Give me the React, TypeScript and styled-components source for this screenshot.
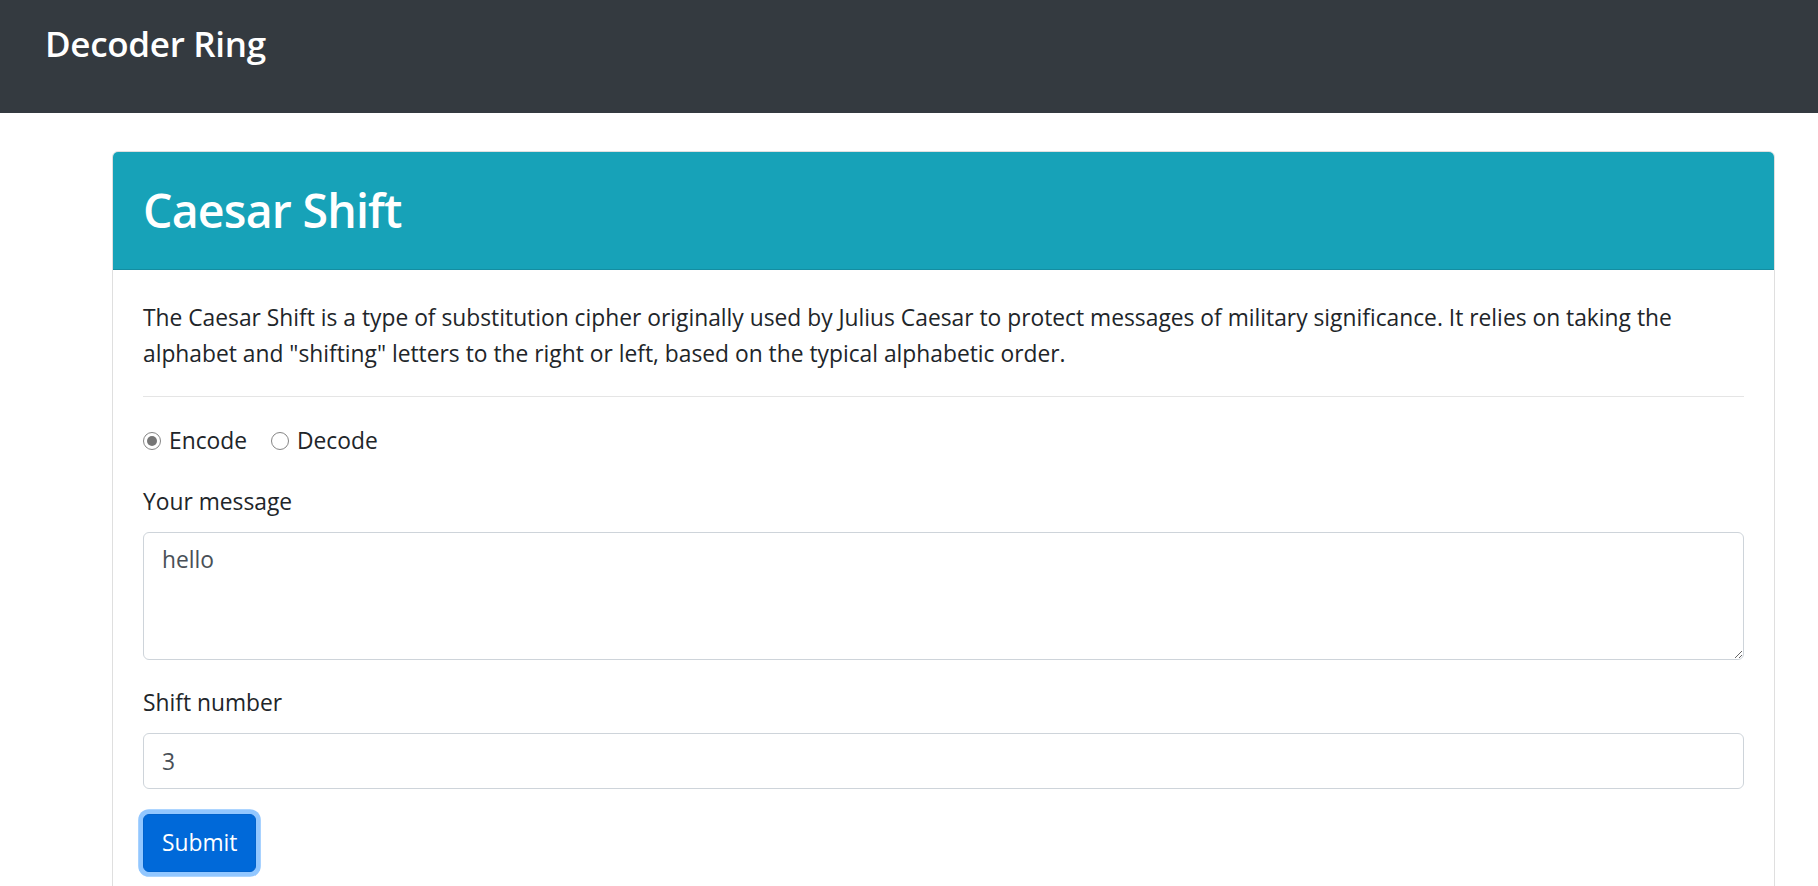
import React from "react";
import styled, { createGlobalStyle } from "styled-components";

const GlobalStyle = createGlobalStyle`
  html, body {
    margin: 0;
    padding: 0;
    background: #fff;
  }
  body {
    font-family: "Open Sans", "Noto Sans", "Liberation Sans", sans-serif;
    font-size: 22.8px;
    line-height: 36px;
    color: #212529;
  }
  * {
    box-sizing: border-box;
  }
`;

const Navbar = styled.nav`
  height: 113px;
  background: #343a40;
  padding: 22px 0 0 45px;
`;

const Brand = styled.a`
  display: inline-block;
  font-size: 35px;
  line-height: 44px;
  font-weight: 600;
  color: #fff;
  text-decoration: none;
  letter-spacing: -0.3px;
`;

const Main = styled.main`
  padding: 38px 43px 0 112px;
`;

const Card = styled.section`
  border: 1px solid rgba(0, 0, 0, 0.125);
  border-radius: 6px;
  overflow: hidden;
`;

const CardHeader = styled.header`
  height: 118px;
  background: #17a2b8;
  border-bottom: 1px solid rgba(0, 0, 0, 0.125);
  padding: 28px 30px 0;
`;

const Title = styled.h2`
  margin: 0;
  font-size: 46.5px;
  line-height: 60px;
  font-weight: 600;
  color: #fff;
  letter-spacing: -0.8px;
`;

const CardBody = styled.div`
  padding: 30px 30px 40px;
`;

const Intro = styled.p`
  margin: 0 0 24px;
`;

const Divider = styled.hr`
  margin: 0 0 24px;
  border: 0;
  border-top: 1px solid rgba(0, 0, 0, 0.1);
`;

const RadioRow = styled.div`
  display: flex;
  align-items: center;
  gap: 24px;
  height: 40px;
  margin-bottom: 23px;
`;

const RadioLabel = styled.label`
  display: flex;
  align-items: center;
  gap: 8px;
  cursor: pointer;
`;

const Radio = styled.input.attrs({ type: "radio" })`
  appearance: none;
  margin: 0;
  width: 18px;
  height: 18px;
  border-radius: 50%;
  border: 1.5px solid #858585;
  background: #fff;
  display: grid;
  place-items: center;

  &:checked::after {
    content: "";
    width: 10px;
    height: 10px;
    border-radius: 50%;
    background: #767676;
  }
`;

const Group = styled.div`
  margin-bottom: 25px;
`;

const Label = styled.label`
  display: block;
  margin-bottom: 12px;
`;

const fieldStyles = `
  display: block;
  width: 100%;
  padding: 9px 18px;
  font-family: inherit;
  font-size: 22.8px;
  line-height: 36px;
  color: #495057;
  background: #fff;
  border: 1px solid #ced4da;
  border-radius: 6px;
  outline: none;
`;

const TextArea = styled.textarea`
  ${fieldStyles}
  height: 128px;
  resize: vertical;
`;

const Input = styled.input`
  ${fieldStyles}
  height: 56px;
`;

const SubmitButton = styled.button`
  font-family: inherit;
  font-size: 22.8px;
  line-height: 36px;
  height: 58px;
  padding: 10px 18px;
  color: #fff;
  background: #0069d9;
  border: 1px solid #0062cc;
  border-radius: 6px;
  box-shadow: 0 0 0 4.8px rgba(38, 143, 255, 0.5);
  cursor: pointer;
`;

const App = () => {
  return (
    <>
      <GlobalStyle />
      <Navbar>
        <Brand href="#">Decoder Ring</Brand>
      </Navbar>
      <Main>
        <Card>
          <CardHeader>
            <Title>Caesar Shift</Title>
          </CardHeader>
          <CardBody>
            <Intro>
              The Caesar Shift is a type of substitution cipher originally used by Julius Caesar to
              protect messages of military significance. It relies on taking the alphabet and
              "shifting" letters to the right or left, based on the typical alphabetic order.
            </Intro>
            <Divider />
            <form onSubmit={(e) => e.preventDefault()}>
              <RadioRow>
                <RadioLabel>
                  <Radio name="mode" value="encode" defaultChecked />
                  Encode
                </RadioLabel>
                <RadioLabel>
                  <Radio name="mode" value="decode" />
                  Decode
                </RadioLabel>
              </RadioRow>
              <Group>
                <Label htmlFor="message">Your message</Label>
                <TextArea id="message" rows={3} defaultValue="hello" />
              </Group>
              <Group>
                <Label htmlFor="shift">Shift number</Label>
                <Input id="shift" type="number" defaultValue={3} />
              </Group>
              <SubmitButton type="submit">Submit</SubmitButton>
            </form>
          </CardBody>
        </Card>
      </Main>
    </>
  );
};

export default App;
